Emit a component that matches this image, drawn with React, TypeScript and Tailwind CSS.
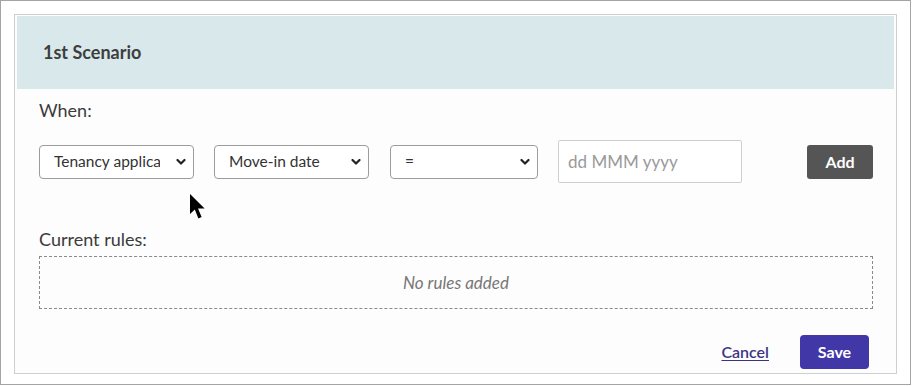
import { useState } from 'react'

function Chevron() {
  return (
    <svg
      className="pointer-events-none absolute right-[8px] top-1/2 -translate-y-1/2"
      width="10"
      height="7"
      viewBox="0 0 10 7"
      fill="none"
    >
      <path d="M1.5 1.5 L5 5 L8.5 1.5" stroke="#222" strokeWidth="2.2" strokeLinecap="round" strokeLinejoin="round" />
    </svg>
  )
}

interface SelectProps {
  value: string
  options: string[]
  width: string
  onChange: (v: string) => void
}

function Select({ value, options, width, onChange }: SelectProps) {
  return (
    <div className={`relative ${width}`}>
      <select
        value={value}
        onChange={(e) => onChange(e.target.value)}
        className="h-[34px] w-full appearance-none rounded-[4px] border border-[#9c9c9c] bg-white pl-[14px] pr-[33px] text-[15.5px] text-[#333] outline-none"
      >
        {options.map((o) => (
          <option key={o} value={o}>
            {o}
          </option>
        ))}
      </select>
      <Chevron />
    </div>
  )
}

export default function App() {
  const [source, setSource] = useState('Tenancy application')
  const [field, setField] = useState('Move-in date')
  const [op, setOp] = useState('=')
  const [date, setDate] = useState('')

  return (
    <div className="relative h-[385px] w-[911px] border border-[#a4a4a4] bg-white p-[13px] font-['Lato','Liberation_Sans',sans-serif] text-[#3b3b3b]">
      {/* Card */}
      <div className="flex h-[360px] flex-col border border-[#c9d0d6] bg-[#fdfdfd] px-[2px] pt-[1px]">
        {/* Header */}
        <div className="flex h-[73px] items-center bg-[#d9e8ea] px-[26px]">
          <h2 className="text-[18px] font-bold text-[#3e3e3e]">1st Scenario</h2>
        </div>

        <div className="flex flex-1 flex-col pl-[22px] pr-[21px]">
          <p className="mt-[9px] text-[18px] leading-6">When:</p>

          {/* Rule builder */}
          <div className="mt-[18px] flex items-center gap-5">
            <Select
              value={source}
              options={['Tenancy application', 'Property', 'Tenant']}
              width="w-[155px]"
              onChange={setSource}
            />
            <Select
              value={field}
              options={['Move-in date', 'Rent amount', 'Status']}
              width="w-[155px]"
              onChange={setField}
            />
            <div className="ml-[1px]">
              <Select value={op} options={['=', '<', '>']} width="w-[148px]" onChange={setOp} />
            </div>
            <input
              value={date}
              onChange={(e) => setDate(e.target.value)}
              placeholder="dd MMM yyyy"
              className="h-[43px] w-[184px] rounded-[2px] border border-[#cfcfcf] bg-white px-[9px] text-[17px] text-[#333] outline-none placeholder:text-[#9a9a9a]"
            />
            <button className="ml-auto h-[34px] w-[66px] rounded-[3px] bg-[#555555] text-[16px] font-bold text-white">
              Add
            </button>
          </div>

          {/* Current rules */}
          <p className="mt-[44px] text-[18px] leading-6">Current rules:</p>
          <div className="mt-[5px] flex h-[53px] items-center justify-center border border-dashed border-[#8a8a8a]">
            <span className="text-[17px] italic text-[#777]">No rules added</span>
          </div>

          {/* Footer */}
          <div className="mt-[26px] flex items-center justify-end gap-[31px] pr-[4px]">
            <a href="#" className="text-[16px] font-semibold text-[#3b3583] underline underline-offset-2">
              Cancel
            </a>
            <button className="h-[34px] w-[69px] rounded-[4px] bg-[#4137a7] text-[16px] font-bold text-white">
              Save
            </button>
          </div>
        </div>
      </div>

      {/* Mouse pointer */}
      <svg className="absolute left-[188px] top-[192px]" width="17" height="27" viewBox="0 0 17 27">
        <path d="M1 1 L1 21 L5.8 16.6 L9.4 25.4 L12.6 24 L9 15.4 L15.6 15.4 Z" fill="#000" />
      </svg>
    </div>
  )
}
